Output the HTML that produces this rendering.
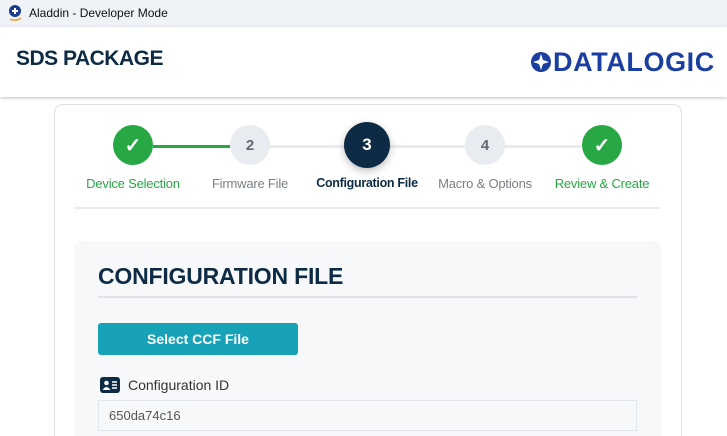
<!DOCTYPE html>
<html><head><style>
*{margin:0;padding:0;box-sizing:border-box}
html,body{width:727px;height:436px;overflow:hidden}
body{background:#fff;font-family:"Liberation Sans",sans-serif;position:relative}
.tb{position:absolute;left:0;top:0;width:727px;height:27px;background:#eff2f6;font-size:12px;color:#111}
.hd{position:absolute;left:0;top:27px;width:727px;height:70px;background:#fff;box-shadow:0 1px 3px rgba(0,0,0,.25)}
.card{position:absolute;left:54px;top:104px;width:628px;height:332px;border:1px solid #dcdfe3;border-bottom:none;border-radius:9px 9px 0 0;background:#fff}
.c{position:absolute;border-radius:50%;display:flex;align-items:center;justify-content:center;font-weight:bold;font-size:15px}
.g{background:#28a745;color:#fff;width:40px;height:40px;top:125px;font-size:20px}
.n{background:#e8ebef;color:#667;width:40px;height:40px;top:125px}
.lbl{position:absolute;top:176px;font-size:13px;width:130px;text-align:center;letter-spacing:-.2px}
</style></head><body>
<div class="tb">
<svg style="position:absolute;left:8px;top:5px" width="15" height="17" viewBox="0 0 15 17"><circle cx="7" cy="6" r="6" fill="#1d3d8f"/><path d="M7 3v6M4 6h6" stroke="#fff" stroke-width="2"/><path d="M2 14q5 3 11-1" stroke="#e8a030" stroke-width="1.5" fill="none"/></svg>
<span style="position:absolute;left:29px;top:6px">Aladdin - Developer Mode</span></div>
<div class="hd">
<div style="position:absolute;left:16px;top:20px;font-size:21px;font-weight:bold;color:#0d2b45;letter-spacing:-.5px">SDS PACKAGE</div>
<svg style="position:absolute;left:530px;top:24px" width="22" height="22" viewBox="0 0 22 22"><circle cx="11" cy="11" r="10" fill="#1a3fa0"/><path d="M11 3L13 9 19 11 13 13 11 19 9 13 3 11 9 9Z" fill="#fff"/></svg>
<div style="position:absolute;left:553px;top:20px;font-size:27px;font-weight:bold;color:#1a3fa0;letter-spacing:.6px">DATALOGIC</div>
</div>
<div class="card"></div>
<div style="position:absolute;left:153px;top:145px;width:77px;height:3px;background:#28a745"></div>
<div style="position:absolute;left:270px;top:145px;width:312px;height:3px;background:#e8ebef"></div>
<div class="c g" style="left:113px">✓</div>
<div class="c n" style="left:230px">2</div>
<div class="c" style="left:344px;top:122px;width:46px;height:46px;background:#0d2b45;color:#fff;font-size:17px;box-shadow:0 3px 8px rgba(0,0,0,.25)">3</div>
<div class="c n" style="left:465px">4</div>
<div class="c g" style="left:582px">✓</div>
<div class="lbl" style="left:68px;color:#28a745">Device Selection</div>
<div class="lbl" style="left:185px;color:#7a8088">Firmware File</div>
<div class="lbl" style="left:302px;color:#0d2b45;font-weight:bold;font-size:12.5px;letter-spacing:-.3px">Configuration File</div>
<div class="lbl" style="left:420px;color:#7a8088">Macro &amp; Options</div>
<div class="lbl" style="left:537px;color:#28a745">Review &amp; Create</div>
<div style="position:absolute;left:74px;top:207px;width:587px;height:2px;background:#e8ebef"></div>
<div style="position:absolute;left:74px;top:241px;width:587px;height:195px;background:#f7f8fa;border-radius:8px 8px 0 0"></div>
<div style="position:absolute;left:98px;top:263px;font-size:23px;font-weight:bold;color:#0d2b45;letter-spacing:-.2px">CONFIGURATION FILE</div>
<div style="position:absolute;left:98px;top:296px;width:539px;height:2px;background:#dfe2e6"></div>
<div style="position:absolute;left:98px;top:323px;width:200px;height:32px;background:#17a2b8;border-radius:3px;color:#fff;font-weight:bold;font-size:14px;display:flex;align-items:center;justify-content:center">Select CCF File</div>
<svg style="position:absolute;left:100px;top:377px" width="20" height="16" viewBox="0 0 20 16"><rect width="20" height="16" rx="3" fill="#0d2b45"/><circle cx="6.5" cy="6" r="2.3" fill="#fff"/><path d="M2.5 13q4-6 8 0z" fill="#fff"/><path d="M12 5h5M12 8h5M12 11h5" stroke="#fff" stroke-width="1.5"/></svg>
<div style="position:absolute;left:128px;top:377px;font-size:14px;color:#333">Configuration ID</div>
<div style="position:absolute;left:98px;top:400px;width:539px;height:31px;border:1px solid #e2e5ea;background:#f7f8fa;font-size:13px;color:#555;padding:7px 10px">650da74c16</div>
</body></html>
